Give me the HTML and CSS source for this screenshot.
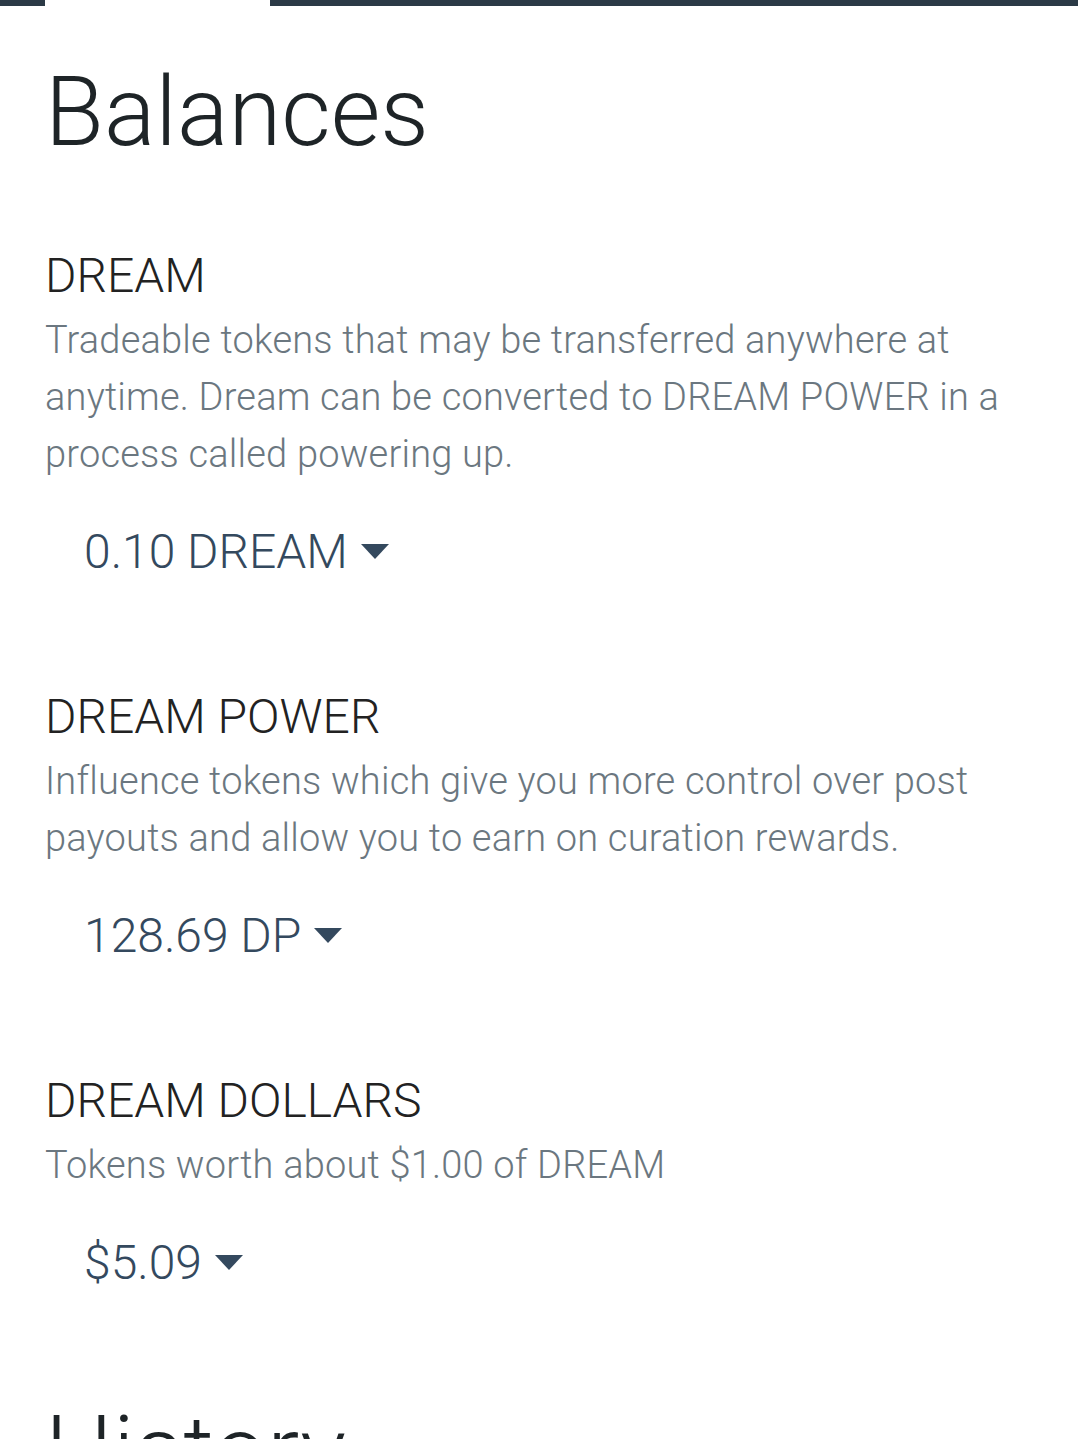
FILE: index.html
```html
<!DOCTYPE html>

<html>

<head>
	<title>Wallet balances</title>
	<link rel="stylesheet" href="styles.css">
</head>

<body>
	<div class="tabbar">
		<span class="tab-active"></span>
	</div>

	<main class="page">
		<h1>Balances</h1>

		<section class="balance">
			<h2>DREAM</h2>
			<p class="desc">Tradeable tokens that may be transferred anywhere at
			anytime. Dream can be converted to DREAM POWER in a
			process called powering up.</p>
			<div class="amount">0.10 DREAM<span class="caret"></span></div>
		</section>

		<section class="balance">
			<h2>DREAM POWER</h2>
			<p class="desc">Influence tokens which give you more control over post
			payouts and allow you to earn on curation rewards.</p>
			<div class="amount">128.69 DP<span class="caret"></span></div>
		</section>

		<section class="balance">
			<h2>DREAM DOLLARS</h2>
			<p class="desc">Tokens worth about $1.00 of DREAM</p>
			<div class="amount">$5.09<span class="caret"></span></div>
		</section>

		<h1>History</h1>
	</main>
</body>

</html>
```

FILE: styles.css
```css
body {
	margin: 0;
	font-family: Roboto, "Liberation Sans", sans-serif;
	font-weight: 300;
	background-color: #fff;
	color: #222;
}

.tabbar {
	height: 6px;
	background-color: #2b3a46;
	display: flex;
}

.tab-active {
	margin-left: 45px;
	width: 225px;
	background-color: #fff;
}

.page {
	padding: 0 45px;
}

h1 {
	font-size: 96px;
	font-weight: 300;
	line-height: 115px;
	color: #1e2427;
	margin: 49px 0 77px;
}

.balance {
	margin-bottom: 108px;
}

.balance:last-of-type {
	margin-bottom: 103px;
}

h2 {
	font-size: 48px;
	font-weight: 300;
	line-height: 58px;
	color: #222;
	margin: 0 0 7px;
}

.desc {
	font-size: 38px;
	letter-spacing: 0.2px;
	line-height: 57px;
	color: #6b7780;
	margin: 0 0 41px;
}

.amount {
	font-size: 48px;
	line-height: 56px;
	color: #34495e;
	padding-left: 39px;
}

.caret {
	display: inline-block;
	margin-left: 13px;
	vertical-align: 9px;
	width: 0;
	height: 0;
	border-left: 14px solid transparent;
	border-right: 14px solid transparent;
	border-top: 15px solid #34495e;
}
```
